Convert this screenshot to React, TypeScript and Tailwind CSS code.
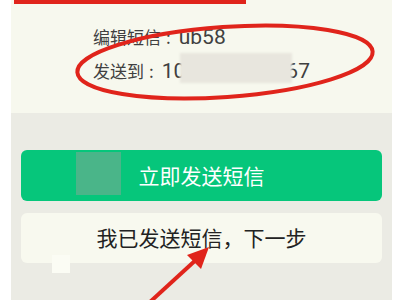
import React from 'react';

const font = { fontFamily: '"Noto Sans CJK SC", "Noto Sans", sans-serif' };
const latin = { fontFamily: 'Roboto, "Noto Sans", sans-serif' };

export default function App() {
  return (
    <div className="relative w-[400px] h-[300px] overflow-hidden bg-white flex" style={font}>
      <div className="ml-[11px] w-[381px] h-full flex flex-col bg-[#ebebe4]">
        {/* info panel */}
        <div className="h-[113px] bg-[#f7f8ee] pl-[82px] pt-[24px] flex flex-col gap-[8px] text-[17px] leading-[26px] text-[#404040]">
          <div className="flex items-center">
            <span>编辑短信</span>
            <span className="ml-[5px] mr-[8px]">:</span>
            <span className="text-[21px]" style={latin}>ub58</span>
          </div>
          <div className="flex items-center">
            <span>发送到</span>
            <span className="ml-[5px] mr-[8px]">:</span>
            <span className="text-[21px]" style={latin}>10</span>
            <span className="inline-block w-[101px]" />
            <span className="text-[21px]" style={latin}>67</span>
          </div>
        </div>
        {/* buttons */}
        <div className="px-[10px] pt-[37px] flex flex-col gap-[12px]">
          <div className="h-[51px] rounded-[6px] bg-[#06c67b] flex items-center justify-center text-white text-[21px]">
            立即发送短信
          </div>
          <div className="h-[50px] rounded-[6px] bg-[#f8f9ef] flex items-center justify-center text-[#222] text-[21px]">
            我已发送短信，下一步
          </div>
        </div>
      </div>

      {/* annotations */}
      <div className="absolute left-[180px] top-[53px] w-[112px] h-[30px] bg-[#e8e6de] blur-[1px]" />
      <div className="absolute left-[14px] top-0 w-[232px] h-[4px] bg-[#e0241b]" />
      <div className="absolute left-[76px] top-[152px] w-[45px] h-[43px] bg-[#4ab589]" />
      <div className="absolute left-[52px] top-[255px] w-[18px] h-[18px] bg-[#fbfcf4]" />
      <svg className="absolute left-0 top-0" width="400" height="300" viewBox="0 0 400 300">
        <ellipse cx="225" cy="62" rx="148" ry="35" fill="none" stroke="#e0241b" strokeWidth="4" transform="rotate(-4 225 62)" />
        <line x1="150" y1="302" x2="198" y2="258" stroke="#e0241b" strokeWidth="4" />
        <polygon points="209,247 187,255 201,269" fill="#e0241b" />
      </svg>
    </div>
  );
}
